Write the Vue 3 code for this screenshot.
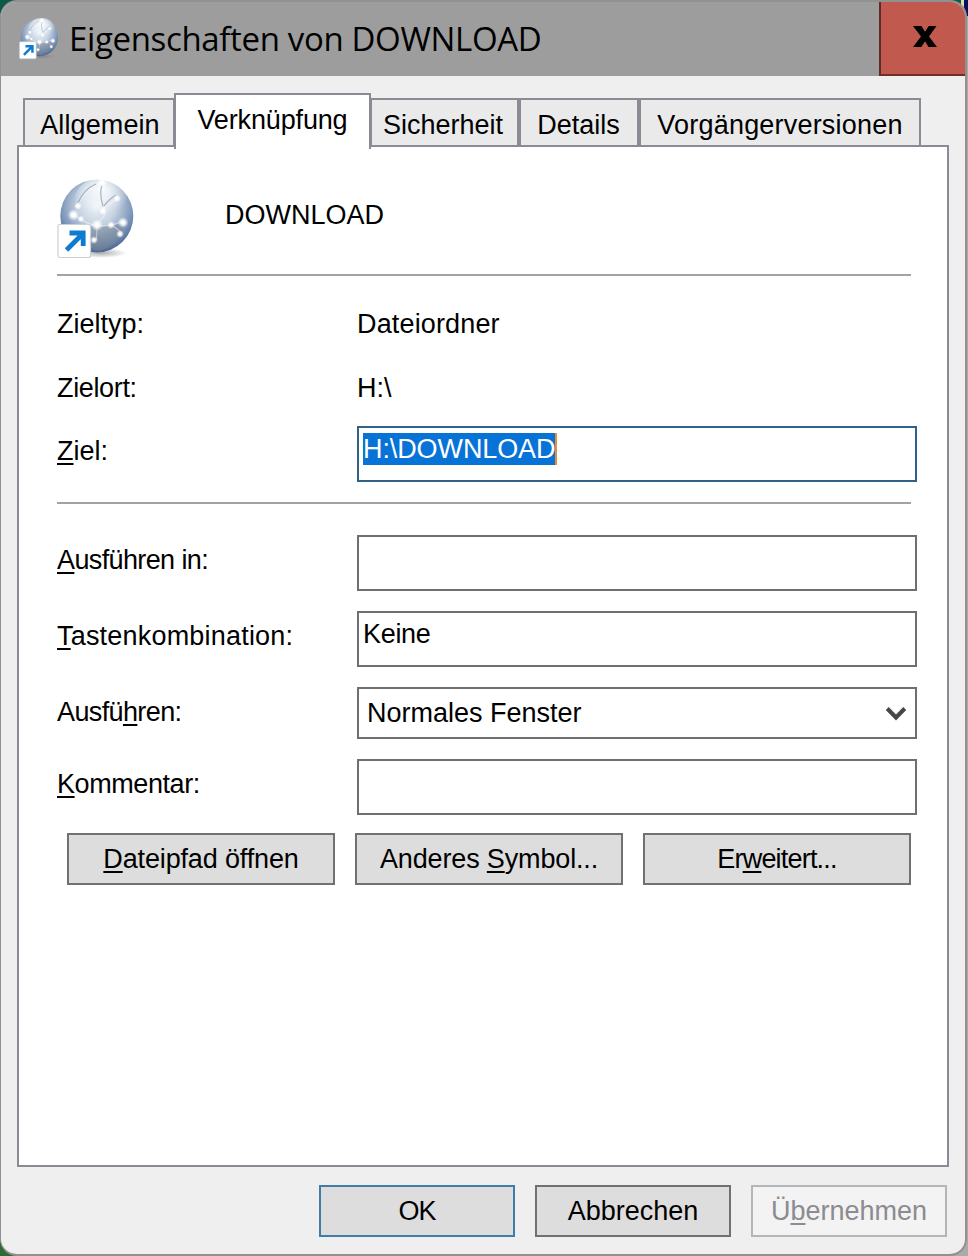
<script setup>
import { ref } from 'vue';

const activeTab = ref('link');
const target = ref('H:\\DOWNLOAD');

const tabs = [
  { id: 'general', label: 'Allgemein' },
  { id: 'link', label: 'Verknüpfung' },
  { id: 'security', label: 'Sicherheit' },
  { id: 'details', label: 'Details' },
  { id: 'versions', label: 'Vorgängerversionen' },
];

// [before, access key, after]
const actions = [
  { id: 'open', text: ['', 'D', 'ateipfad öffnen'] },
  { id: 'icon', text: ['Anderes ', 'S', 'ymbol...'] },
  { id: 'advanced', text: ['Er', 'w', 'eitert...'] },
];
</script>

<template>
  <div class="desktop">
    <div class="dialog">
      <header class="titlebar">
        <svg class="title-icon" viewBox="0 0 78 82">
          <use href="#globe" />
        </svg>
        <h1 class="title">Eigenschaften von DOWNLOAD</h1>
        <button class="close">
          <svg viewBox="0 0 24 22" width="24" height="22">
            <path d="M0 0H8.5L12 5.8L15.7 0H23.5L16 10.4L24 21H15.5L12 15.2L8.3 21H0L8 10.4Z" />
          </svg>
        </button>
      </header>

      <nav class="tabs">
        <button
          v-for="tab in tabs"
          :key="tab.id"
          class="tab"
          :class="[tab.id, { active: tab.id === activeTab }]"
          @click="activeTab = tab.id"
        ><span>{{ tab.label }}</span></button>
      </nav>

      <main class="panel">
        <div class="head">
          <svg class="head-icon" viewBox="0 0 78 82">
            <defs>
              <radialGradient id="sphere" cx="0.5" cy="0.36" r="0.64">
                <stop offset="0" stop-color="#eef3f7" />
                <stop offset="0.4" stop-color="#c6d4e3" />
                <stop offset="0.74" stop-color="#8199bb" />
                <stop offset="1" stop-color="#4a6592" />
              </radialGradient>
              <radialGradient id="shine" cx="0.5" cy="0.25" r="0.6">
                <stop offset="0" stop-color="#fff" stop-opacity="0.95" />
                <stop offset="1" stop-color="#fff" stop-opacity="0" />
              </radialGradient>
              <radialGradient id="floor" cx="0.5" cy="0.5" r="0.5">
                <stop offset="0" stop-color="#777" stop-opacity="0.6" />
                <stop offset="1" stop-color="#777" stop-opacity="0" />
              </radialGradient>
              <radialGradient id="dot">
                <stop offset="0.3" stop-color="#fff" />
                <stop offset="1" stop-color="#fff" stop-opacity="0" />
              </radialGradient>
              <g id="globe">
                <ellipse cx="44" cy="75" rx="26" ry="5" fill="url(#floor)" />
                <circle cx="39.8" cy="38" r="36.5" fill="url(#sphere)" />
                <path d="M22 46Q38 52 66 45Q66 66 42 73Q24 70 22 46Z" fill="#7b8893" opacity="0.5" />
                <ellipse cx="44" cy="21" rx="26" ry="21" fill="url(#shine)" />
                <g fill="none" stroke="#fff" stroke-width="1.1" opacity="0.45">
                  <path d="M16 36Q39 56 66 43M46 31Q56 24 62 19M20 28Q30 10 44 5" />
                  <path d="M40 45Q52 36 46 31M40 45Q40 58 39 62M54 46L65 55" />
                </g>
                <g fill="none" stroke="#8496ad" stroke-width="1.2" opacity="0.7">
                  <path d="M21 25Q27 11 39 6M47 28Q51 22 59 17M46 28Q42 15 45 7" />
                </g>
                <g fill="url(#dot)">
                  <circle cx="16.5" cy="37" r="6" />
                  <circle cx="21" cy="28" r="4" />
                  <circle cx="24" cy="41" r="3.5" />
                  <circle cx="45" cy="4.5" r="5" />
                  <circle cx="60" cy="20.5" r="4" />
                  <circle cx="66" cy="44.5" r="5.5" />
                  <circle cx="63" cy="56" r="4" />
                  <circle cx="54" cy="47" r="4" />
                  <circle cx="40" cy="47" r="6" />
                  <circle cx="46" cy="33" r="4" />
                  <circle cx="37" cy="62" r="4" />
                </g>
                <rect x="1" y="46.5" width="32.5" height="33" rx="2" fill="#fff" stroke="#cbcfd6" stroke-width="1.2" />
                <path d="M9.5 72L25.5 56M12.5 55H26.2V68" fill="none" stroke="#0f7bd0" stroke-width="4.8" />
              </g>
            </defs>
            <use href="#globe" />
          </svg>
          <span class="name">DOWNLOAD</span>
        </div>

        <hr class="line">

        <div class="row info"><span class="label">Zieltyp:</span><span class="type">Dateiordner</span></div>
        <div class="row info"><span class="label place">Zielort:</span><span>H:\</span></div>
        <div class="row field">
          <span class="label"><u>Z</u>iel:</span>
          <div class="box focus"><span class="selection">{{ target }}</span></div>
        </div>

        <hr class="line second">

        <div class="row field">
          <span class="label run"><u>A</u>usführen in:</span>
          <div class="box"></div>
        </div>
        <div class="row field">
          <span class="label keys"><u>T</u>astenkombination:</span>
          <div class="box"><span class="value">Keine</span></div>
        </div>
        <div class="row field">
          <span class="label run">Ausfü<u>h</u>ren:</span>
          <div class="box select">
            <span>Normales Fenster</span>
            <svg viewBox="0 0 20 16" width="20" height="16">
              <path d="M1.2 2.5L10 11.5L18.8 2.5" />
            </svg>
          </div>
        </div>
        <div class="row field">
          <span class="label comment"><u>K</u>ommentar:</span>
          <div class="box"></div>
        </div>

        <div class="actions">
          <button v-for="a in actions" :key="a.id" class="btn" :class="a.id">
            <span>{{ a.text[0] }}<u>{{ a.text[1] }}</u>{{ a.text[2] }}</span>
          </button>
        </div>
      </main>

      <footer class="footer">
        <button class="btn ok"><span>OK</span></button>
        <button class="btn cancel"><span>Abbrechen</span></button>
        <button class="btn apply" disabled><span>Ü<u>b</u>ernehmen</span></button>
      </footer>
    </div>
  </div>
</template>

<style>
body {
  margin: 0;
  overflow: hidden;
}
</style>

<style scoped>
.desktop {
  width: 968px;
  height: 1256px;
  background:
    linear-gradient(#0b5a48, #0b5a48) 0 0 / 30px 30px no-repeat,
    linear-gradient(90deg, #0b5a48 15px, #e5dca0 15px 18px, #08105c 18px) 100% 0 / 22px 16px no-repeat,
    linear-gradient(#2c6b33, #2c6b33) 0 100% / 30px 30px no-repeat,
    #aaa;
  font-family: "Liberation Sans", Arial, sans-serif;
  font-size: 27px;
  line-height: 32px;
  color: #000;
}

.dialog {
  box-sizing: border-box;
  width: 967px;
  height: 1256px;
  display: flex;
  flex-direction: column;
  border: 2px solid #919191;
  border-left-width: 1px;
  border-radius: 17px;
  background: #efefef;
  overflow: hidden;
}

button {
  font: inherit;
  color: inherit;
  padding: 0;
  margin: 0;
}

span {
  white-space: nowrap;
}

u {
  text-decoration-thickness: 2px;
  text-underline-offset: 3px;
  text-decoration-skip-ink: none;
}

.titlebar {
  flex: none;
  display: flex;
  align-items: stretch;
  box-sizing: border-box;
  height: 74px;
  padding-left: 18px;
  background: #9d9d9d;
}

.title-icon {
  width: 40px;
  height: 42px;
  margin-top: 16px;
}

.title {
  flex: 1;
  margin: 14px 0 0 10px;
  font: 400 33px/46px "Open Sans", "Noto Sans", sans-serif;
  letter-spacing: -0.35px;
  white-space: nowrap;
}

.close {
  width: 86px;
  border: 0;
  border-left: 2px solid #5c2c28;
  border-bottom: 2px solid #6e302b;
  background: #c2594f;
}
.close svg {
  display: block;
  margin: -3px 0 0 32px;
}

.tabs {
  flex: none;
  display: flex;
  align-items: flex-end;
  height: 69px;
  padding-left: 22px;
}

.tab {
  box-sizing: border-box;
  height: 48px;
  margin-bottom: -1px;
  border: 2px solid #8b8b93;
  border-bottom: 0;
  background: #eaeaea;
}
.tab span {
  position: relative;
  top: 2px;
}
.tab.active {
  position: relative;
  height: 56px;
  margin: 0 -1px -4px;
  background: #fff;
}
.tab.active span {
  top: -2px;
}
.tab.general {
  width: 152px;
  padding-left: 2px;
  letter-spacing: 0.1px;
}
.tab.link {
  width: 197px;
  letter-spacing: -0.15px;
}
.tab.security {
  width: 149px;
  padding-right: 3px;
}
.tab.details {
  width: 120px;
  padding-right: 1px;
}
.tab.versions {
  width: 282px;
  letter-spacing: 0.2px;
}

.panel {
  flex: none;
  box-sizing: border-box;
  width: 932px;
  height: 1022px;
  margin-left: 16px;
  padding: 0 30px 0 38px;
  border: 2px solid #8b8b93;
  background: #fff;
}

.head {
  display: flex;
  height: 127px;
}
.head-icon {
  width: 78px;
  height: 82px;
  margin-top: 31px;
}
.name {
  margin: 52px 0 0 90px;
}

.line {
  width: 854px;
  height: 2px;
  margin: 0 0 16px;
  border: 0;
  background: #a2a2a2;
}
.line.second {
  margin: 20px 0 31px;
}

.row {
  display: grid;
  grid-template-columns: 300px 560px;
}
.row.info {
  height: 64px;
  line-height: 64px;
}
.row.field {
  margin-bottom: 20px;
}
.row.info + .row.field {
  margin-top: 6px;
}
.row.field .label {
  margin-top: 9px;
}

/* widths of the hinted dialog font */
.type { letter-spacing: 0.15px; }
.place { letter-spacing: -0.35px; }
.run { letter-spacing: -0.62px; }
.keys { letter-spacing: 0.2px; }
.comment { letter-spacing: -0.42px; }
.value { letter-spacing: -0.3px; }
.open,
.icon { letter-spacing: -0.15px; }
.advanced { letter-spacing: -0.8px; }
.ok { letter-spacing: -1px; }

.box {
  box-sizing: border-box;
  height: 56px;
  padding: 5px 4px;
  border: 2px solid #6f6f6f;
  background: #fff;
}
.box.focus {
  border-color: #2f6288;
}
.selection {
  display: inline-block;
  height: 32px;
  border-right: 2px solid #f08c2c;
  background: #0873d6;
  color: #fff;
  letter-spacing: -0.1px;
}
.box.select {
  display: flex;
  justify-content: space-between;
  height: 52px;
  padding: 8px 9px 0 8px;
}
.box.select svg {
  margin-top: 9px;
  fill: none;
  stroke: #474747;
  stroke-width: 4.2;
}

.actions {
  display: flex;
  gap: 20px;
  margin: -2px 0 0 10px;
}
.btn {
  box-sizing: border-box;
  width: 268px;
  height: 52px;
  border: 2px solid #717171;
  background: #ddd;
}

.footer {
  display: flex;
  gap: 20px;
  margin: 18px 0 0 318px;
}
.footer .btn {
  width: 196px;
}
.footer .ok {
  border-color: #427ca8;
}
.footer .apply {
  border-color: #b2b5b9;
  background: #f3f3f3;
  color: #8b8b91;
}
</style>
